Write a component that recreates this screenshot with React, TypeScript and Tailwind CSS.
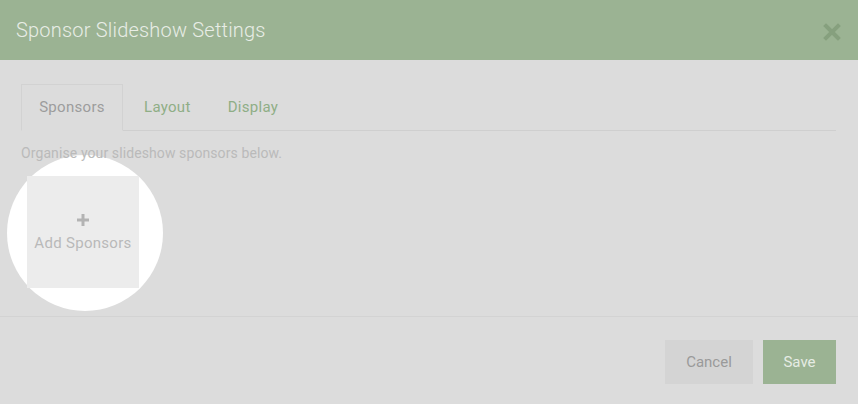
export default function App() {
  return (
    <div className="w-[858px] h-[404px] bg-[#dcdcdc] overflow-hidden flex flex-col font-['Roboto',_sans-serif]">
      {/* header */}
      <div className="h-[60px] shrink-0 bg-[#9bb393] flex items-center justify-between pl-4 pr-[17px]">
        <h1 className="text-[20px] font-light text-[#e8ede6] tracking-[0.2px]">Sponsor Slideshow Settings</h1>
        <svg width="18" height="18" viewBox="0 0 18 18" className="mt-[4px]">
          <path d="M3 3 L15 15 M15 3 L3 15" stroke="#86a07e" strokeWidth="4" strokeLinecap="square" />
        </svg>
      </div>

      {/* body */}
      <div className="h-[256px] shrink-0 pl-[21px] pr-[22px] pt-[24px]">
        <div className="flex border-b border-[#cfcfcf] h-[47px]">
          <div className="w-[102px] h-[47px] -mb-px border border-[#d2d2d2] border-b-[#dcdcdc] bg-[#dcdcdc] flex items-center justify-center text-[15px] tracking-[0.3px] text-[#9c9c9c]">
            Sponsors
          </div>
          <div className="pl-[21px] pr-[19px] flex items-center text-[15px] tracking-[0.3px] text-[#8fae86]">Layout</div>
          <div className="px-[18px] flex items-center text-[15px] tracking-[0.3px] text-[#8fae86]">Display</div>
        </div>

        <p className="relative z-10 mt-[12px] text-[14px] leading-[20px] tracking-[0.1px] text-[#bababa]">
          Organise your slideshow sponsors below.
        </p>

        <div className="relative mt-[13px] ml-[6px] w-[112px] h-[112px]">
          <div className="absolute -left-[20px] -top-[21px] w-[156px] h-[156px] rounded-full bg-white" />
          <div className="relative w-[112px] h-[112px] bg-[#ececec] flex flex-col items-center pt-[37px]">
            <svg width="14" height="14" viewBox="0 0 14 14">
              <path d="M7 1 V13 M1 7 H13" stroke="#b3b3b3" strokeWidth="3" />
            </svg>
            <span className="mt-[6px] text-[15px] leading-[20px] tracking-[0.3px] text-[#b9b9b9]">Add Sponsors</span>
          </div>
        </div>
      </div>

      {/* footer */}
      <div className="flex-1 border-t border-[#d3d3d3] flex justify-end items-start gap-[10px] pt-[23px] pr-[22px]">
        <button className="w-[88px] h-[44px] bg-[#d4d4d4] text-[15px] text-[#9a9a9a]">Cancel</button>
        <button className="w-[73px] h-[44px] bg-[#9bb393] text-[15px] text-[#e6ece4]">Save</button>
      </div>
    </div>
  );
}
